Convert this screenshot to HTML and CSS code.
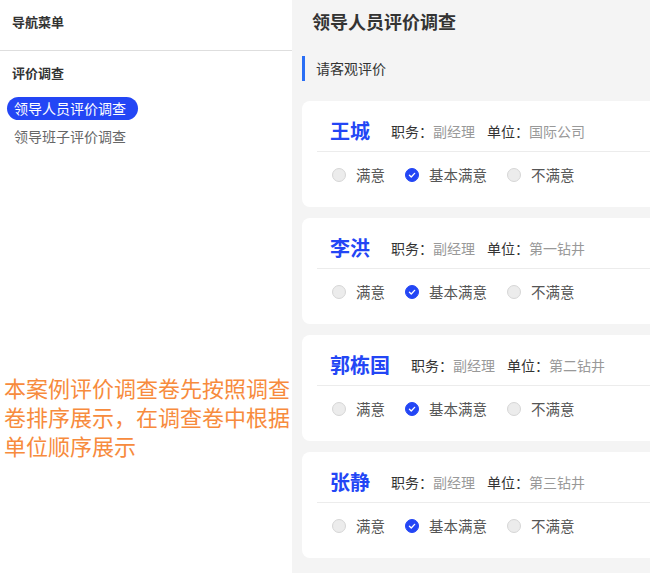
FILE: index.html
```html
<!DOCTYPE html>
<html lang="zh-CN">
<head>
<meta charset="utf-8">
<title>领导人员评价调查</title>
<link rel="stylesheet" href="styles.css">
</head>
<body>
<div class="app">
  <aside class="sidebar">
    <div class="nav-title">导航菜单</div>
    <div class="group-title">评价调查</div>
    <div class="menu">
      <div class="menu-item active">领导人员评价调查</div>
      <div class="menu-item">领导班子评价调查</div>
    </div>
    <div class="note">本案例评价调查卷先按照调查卷排序展示，在调查卷中根据单位顺序展示</div>
  </aside>
  <main class="content">
    <h1 class="page-title">领导人员评价调查</h1>
    <div class="prompt">请客观评价</div>

    <div class="card">
      <div class="card-head">
        <span class="name">王城</span>
        <span class="label">职务：</span><span class="value">副经理</span>
        <span class="label gap">单位：</span><span class="value">国际公司</span>
      </div>
      <div class="options">
        <span class="opt"><i class="radio"></i>满意</span>
        <span class="opt"><i class="radio checked"><svg viewBox="0 0 16 16" width="16" height="16"><path d="M4.6 8.3 L7 10.6 L11.5 5.8" fill="none" stroke="#fff" stroke-width="1.8" stroke-linecap="round" stroke-linejoin="round"/></svg></i>基本满意</span>
        <span class="opt"><i class="radio"></i>不满意</span>
      </div>
    </div>

    <div class="card">
      <div class="card-head">
        <span class="name">李洪</span>
        <span class="label">职务：</span><span class="value">副经理</span>
        <span class="label gap">单位：</span><span class="value">第一钻井</span>
      </div>
      <div class="options">
        <span class="opt"><i class="radio"></i>满意</span>
        <span class="opt"><i class="radio checked"><svg viewBox="0 0 16 16" width="16" height="16"><path d="M4.6 8.3 L7 10.6 L11.5 5.8" fill="none" stroke="#fff" stroke-width="1.8" stroke-linecap="round" stroke-linejoin="round"/></svg></i>基本满意</span>
        <span class="opt"><i class="radio"></i>不满意</span>
      </div>
    </div>

    <div class="card">
      <div class="card-head">
        <span class="name">郭栋国</span>
        <span class="label">职务：</span><span class="value">副经理</span>
        <span class="label gap">单位：</span><span class="value">第二钻井</span>
      </div>
      <div class="options">
        <span class="opt"><i class="radio"></i>满意</span>
        <span class="opt"><i class="radio checked"><svg viewBox="0 0 16 16" width="16" height="16"><path d="M4.6 8.3 L7 10.6 L11.5 5.8" fill="none" stroke="#fff" stroke-width="1.8" stroke-linecap="round" stroke-linejoin="round"/></svg></i>基本满意</span>
        <span class="opt"><i class="radio"></i>不满意</span>
      </div>
    </div>

    <div class="card">
      <div class="card-head">
        <span class="name">张静</span>
        <span class="label">职务：</span><span class="value">副经理</span>
        <span class="label gap">单位：</span><span class="value">第三钻井</span>
      </div>
      <div class="options">
        <span class="opt"><i class="radio"></i>满意</span>
        <span class="opt"><i class="radio checked"><svg viewBox="0 0 16 16" width="16" height="16"><path d="M4.6 8.3 L7 10.6 L11.5 5.8" fill="none" stroke="#fff" stroke-width="1.8" stroke-linecap="round" stroke-linejoin="round"/></svg></i>基本满意</span>
        <span class="opt"><i class="radio"></i>不满意</span>
      </div>
    </div>
  </main>
</div>
</body>
</html>
```

FILE: styles.css
```css
* { box-sizing: border-box; }
html, body {
  margin: 0;
  padding: 0;
  height: 573px;
  overflow: hidden;
}
body {
  font-family: "Noto Sans CJK SC", "Noto Sans", sans-serif;
  color: #333;
  background: #fff;
}
.app {
  display: flex;
  height: 573px;
}
.sidebar {
  width: 292px;
  flex: none;
  background: #fff;
}
.nav-title {
  height: 51px;
  padding: 13px 0 0 12px;
  font-size: 13px;
  line-height: 18px;
  font-weight: bold;
  color: #333;
  border-bottom: 1px solid #dedede;
}
.group-title {
  padding: 13px 0 0 12px;
  font-size: 13px;
  line-height: 18px;
  font-weight: bold;
  color: #333;
}
.menu {
  margin-top: 15px;
  padding-left: 7px;
  display: flex;
  flex-direction: column;
  align-items: flex-start;
  gap: 5px;
}
.menu-item {
  font-size: 14px;
  line-height: 23px;
  height: 23px;
  padding: 0 12px 0 7px;
  color: #666;
}
.menu-item.active {
  background: #2346f5;
  color: #fff;
  border-radius: 12px;
}
.note {
  margin-top: 225px;
  padding-left: 4px;
  padding-right: 0;
  font-size: 22px;
  line-height: 29px;
  color: #f78b3d;
}
.content {
  flex: 1;
  background: #f4f4f4;
  padding-left: 10px;
  overflow: hidden;
}
.page-title {
  margin: 0;
  padding: 9px 0 0 10px;
  font-size: 18px;
  line-height: 24px;
  font-weight: bold;
  color: #333;
}
.prompt {
  margin-top: 23px;
  height: 25px;
  line-height: 24px;
  border-left: 3px solid #2a6ef5;
  padding-left: 11px;
  font-size: 14px;
  color: #333;
}
.card {
  width: 420px;
  height: 106px;
  margin-top: 20px;
  background: #fff;
  border-radius: 8px;
  padding: 0 0 0 15px;
}
.card + .card {
  margin-top: 11px;
}
.card-head {
  height: 51px;
  padding: 10px 0 0 13px;
  border-bottom: 1px solid #ececec;
  display: flex;
  align-items: center;
}
.name {
  font-size: 20px;
  font-weight: bold;
  color: #2346f5;
  margin-right: 21px;
  line-height: 28px;
}
.label {
  font-size: 14px;
  color: #333;
}
.label.gap {
  margin-left: 12px;
}
.value {
  font-size: 14px;
  color: #999;
}
.options {
  display: flex;
  align-items: center;
  padding: 15px 0 0 15px;
  gap: 20px;
}
.opt {
  display: flex;
  align-items: center;
  font-size: 14.5px;
  line-height: 16px;
  color: #555;
}
.radio {
  width: 14px;
  height: 14px;
  border-radius: 50%;
  background: #ececec;
  border: 1px solid #d6d6d6;
  margin-right: 10px;
  display: flex;
  align-items: center;
  justify-content: center;
}
.radio.checked {
  background: #2346f5;
  border-color: #2346f5;
}
.radio.checked svg {
  width: 12px;
  height: 12px;
}
```
